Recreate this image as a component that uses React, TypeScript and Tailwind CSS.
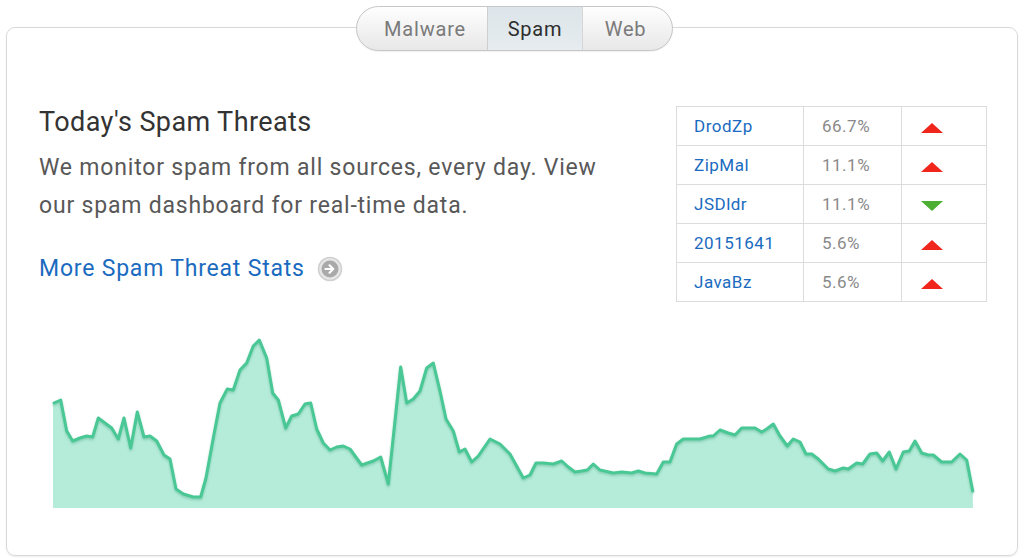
import React from "react";

const pts: [number, number][] = [
  [54, 402], [60.7, 399], [66.7, 430], [72.7, 440], [80, 437], [86.7, 435], [92.7, 436], [98.3, 417],
  [105, 422], [111.7, 427], [118.3, 438], [124, 417], [130.7, 447], [137.3, 411], [144, 436], [150, 435],
  [156.7, 440], [164, 454], [170, 458], [176, 488], [183.3, 493], [193.3, 496], [200.7, 496], [206, 477],
  [213.3, 437], [220, 402], [227.3, 388], [233.3, 389], [240, 369], [246.7, 362], [253.3, 345], [259.3, 339],
  [266.7, 357], [272.7, 392], [278.3, 399], [285.7, 427], [291.7, 415], [298.3, 413], [305, 403], [310.7, 402],
  [316.7, 428], [323.3, 442], [330, 449], [336.7, 446], [343.3, 445], [350, 448], [361.7, 464], [373.3, 460],
  [380.7, 456], [388.3, 483], [400.7, 366], [406.7, 402], [413.3, 398], [420, 390], [426.7, 367], [433.3, 362],
  [440, 390], [446, 418], [453.3, 430], [459.3, 451], [465, 448], [471.7, 461], [478.3, 455], [490, 438],
  [500, 443], [510, 453], [523.3, 477], [530, 474], [536, 462], [543.3, 462], [553.3, 463], [561.7, 460],
  [568.3, 466], [575, 471], [581.7, 470], [587.3, 469], [593.3, 463], [600, 469], [613.3, 472], [621.7, 471],
  [631.7, 472], [638.3, 470], [645, 472], [656.7, 473], [663.3, 461], [670, 461], [676.7, 443], [683.3, 438],
  [693.3, 438], [700, 438], [710, 435], [713.3, 435], [720, 429], [728.3, 432], [735, 434], [741.7, 427],
  [750, 427], [755, 427], [761.7, 431], [766.7, 428], [773.3, 423], [780, 435], [787.3, 445], [793.3, 438],
  [800, 441], [806, 453], [811.7, 453], [818.3, 458], [828.3, 468], [835, 470], [843.3, 467], [848.3, 468],
  [856.7, 462], [862.7, 463], [870, 453], [876.7, 452], [882.7, 460], [889.3, 451], [896, 468], [903.3, 451],
  [909.3, 450], [915, 440], [921.7, 452], [928.3, 454], [933.3, 454], [941.7, 461], [951.7, 461], [960, 453],
  [966.7, 459], [972.7, 490],
];

const line = pts.map((p, i) => `${i === 0 ? "M" : "L"}${p[0]},${p[1]}`).join(" ");
const area = `M53,507 L53,402 ${pts.map((p) => `L${p[0]},${p[1]}`).join(" ")} L973,507 Z`;

const rows = [
  { name: "DrodZp", pct: "66.7%", up: true },
  { name: "ZipMal", pct: "11.1%", up: true },
  { name: "JSDldr", pct: "11.1%", up: false },
  { name: "20151641", pct: "5.6%", up: true },
  { name: "JavaBz", pct: "5.6%", up: true },
];

function Triangle({ up }: { up: boolean }) {
  return (
    <svg width="22" height="10" viewBox="0 0 22 10" className="block">
      {up ? (
        <polygon points="11,0 22,10 0,10" fill="#f0261c" />
      ) : (
        <polygon points="0,0 22,0 11,10" fill="#4cae32" />
      )}
    </svg>
  );
}

function ArrowCircle() {
  return (
    <svg width="26" height="26" viewBox="0 0 26 26" className="block">
      <circle cx="13" cy="13" r="11.5" fill="#e6e6e6" stroke="#cfcfcf" strokeWidth="1.5" />
      <circle cx="13" cy="13" r="8.5" fill="#a9a9a9" />
      <path d="M8.5 13h7" stroke="#fff" strokeWidth="2.2" strokeLinecap="round" />
      <path d="M12.5 9.3 16.3 13 12.5 16.7" stroke="#fff" strokeWidth="2.2" fill="none" strokeLinecap="round" strokeLinejoin="round" />
    </svg>
  );
}

export default function App() {
  return (
    <div
      className="w-[1024px] h-[558px] bg-white overflow-hidden"
      style={{ fontFamily: "Roboto, 'Noto Sans', sans-serif" }}
    >
      <div className="flex flex-col pt-[6px]">
        {/* Tabs */}
        <div className="relative z-10 flex justify-center pl-[5px]">
          <div className="flex h-[45px] rounded-full border border-[#c6c6c6] bg-gradient-to-b from-[#fefefe] to-[#e8e8e8] overflow-hidden shadow-[0_1px_1px_rgba(0,0,0,0.06)]">
            <div className="w-[131px] flex items-center justify-center pl-[6px] text-[20px] tracking-[0.8px] text-[#7a7a7a] border-r border-[#cfcfcf]">
              Malware
            </div>
            <div className="w-[95px] flex items-center justify-center text-[20px] tracking-[0.8px] text-[#2e2e2e] bg-gradient-to-b from-[#dde5ea] to-[#e6ecef] border-r border-[#d6d6d6]">
              Spam
            </div>
            <div className="w-[89px] flex items-center justify-center pr-[4px] text-[20px] tracking-[0.8px] text-[#7a7a7a]">
              Web
            </div>
          </div>
        </div>

        {/* Card */}
        <div className="-mt-[24px] ml-[6px] w-[1012px] h-[529px] rounded-[9px] border border-[#d9d9d9] shadow-[0_1px_2px_rgba(0,0,0,0.08)] flex flex-col">
          <div className="h-[302px] flex justify-between items-start pt-[78px] pl-[32px] pr-[30px]">
            <div className="flex flex-col">
              <h2 className="text-[27px] leading-[32px] text-[#333] tracking-[0.4px]">Today's Spam Threats</h2>
              <p className="mt-[11px] text-[23px] leading-[38px] text-[#585858] tracking-[0.8px]">
                We monitor spam from all sources, every day. View
                <br />
                our spam dashboard for real-time data.
              </p>
              <div className="mt-[29px] flex items-center gap-[12px]">
                <span className="text-[23px] leading-[30px] text-[#1a6bc0] tracking-[0.8px]">More Spam Threat Stats</span>
                <ArrowCircle />
              </div>
            </div>
            <table className="border-collapse border border-[#dcdcdc] text-[17px] tracking-[0.5px]">
              <tbody>
                {rows.map((r) => (
                  <tr key={r.name} className="h-[39px]">
                    <td className="w-[127px] border border-[#dcdcdc] pl-[17px] pt-[2px] text-[#1a6bc0]">{r.name}</td>
                    <td className="w-[98px] border border-[#dcdcdc] pl-[18px] pt-[2px] text-[#8a8a8a]">{r.pct}</td>
                    <td className="w-[85px] border border-[#dcdcdc] pl-[19px] pt-[3px]">
                      <Triangle up={r.up} />
                    </td>
                  </tr>
                ))}
              </tbody>
            </table>
          </div>
          <svg width="1010" height="182" viewBox="7 329 1010 182" className="block">
            <defs>
              <filter id="sh" x="-5%" y="-10%" width="110%" height="130%">
                <feDropShadow dx="0" dy="1.5" stdDeviation="1" floodColor="#2a8f68" floodOpacity="0.35" />
              </filter>
            </defs>
            <path d={area} fill="#b4ecd9" />
            <path d={line} fill="none" stroke="#48c795" strokeWidth="3" strokeLinejoin="round" strokeLinecap="round" filter="url(#sh)" />
          </svg>
        </div>
      </div>
    </div>
  );
}
